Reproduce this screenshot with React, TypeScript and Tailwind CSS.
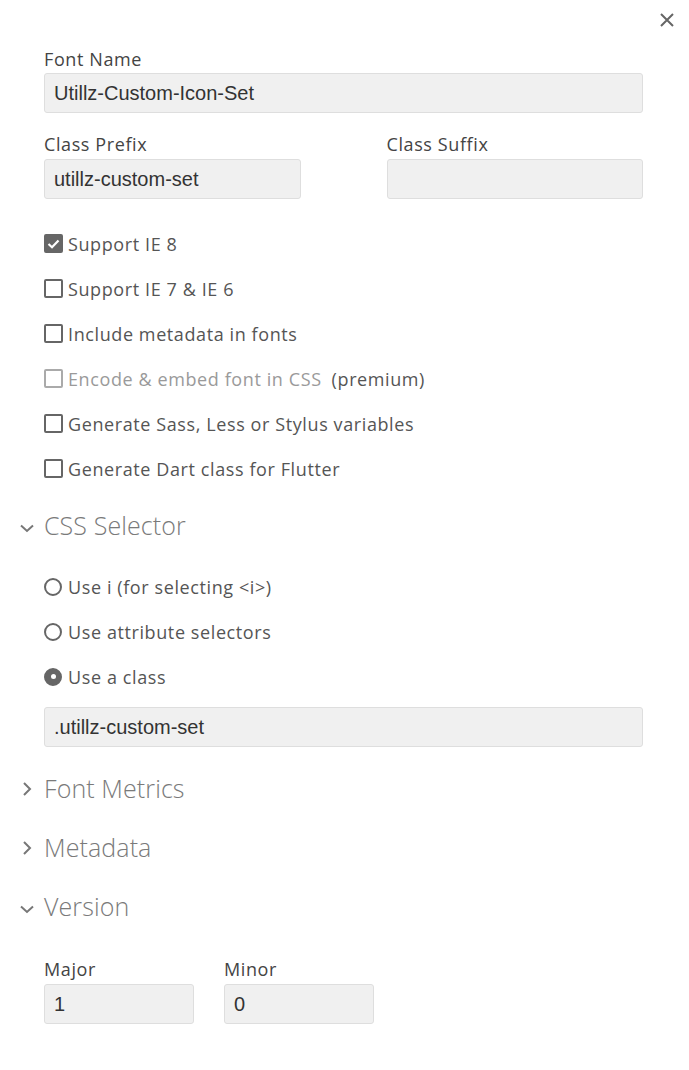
import { useState } from 'react';

const inputCls =
  "block w-full h-[40px] px-[9px] bg-[#f0f0f0] border border-[#dedede] rounded-[3px] text-[20px] tracking-normal text-[#333] font-['Liberation_Sans',Arial,sans-serif] outline-none";

function Chevron({ open }: { open: boolean }) {
  return open ? (
    <svg width="16" height="10" viewBox="0 0 16 10" className="absolute left-[19px] top-1/2 -translate-y-[3px]">
      <path d="M2 2.5 L8 8 L14 2.5" fill="none" stroke="#777" strokeWidth="2" />
    </svg>
  ) : (
    <svg width="10" height="16" viewBox="0 0 10 16" className="absolute left-[22px] top-1/2 -translate-y-1/2">
      <path d="M2 2 L8 8 L2 14" fill="none" stroke="#777" strokeWidth="2" />
    </svg>
  );
}

function Section({ title, open }: { title: string; open: boolean }) {
  return (
    <div className="relative h-[40px] flex items-center -ml-[44px] pl-[44px] text-[25px] tracking-[0.1px] font-light text-[#7a7a7a] cursor-pointer">
      <Chevron open={open} />
      {title}
    </div>
  );
}

function Check({ label, checked, disabled, extra, onToggle }: { label: string; checked?: boolean; disabled?: boolean; extra?: string; onToggle?: () => void }) {
  return (
    <label className="h-[45px] flex items-center cursor-pointer">
      <span
        onClick={onToggle}
        className={`w-[19px] h-[19px] rounded-[2px] border-2 flex items-center justify-center mr-[5px] ${
          checked ? 'bg-[#666] border-[#666]' : disabled ? 'border-[#aaa]' : 'border-[#666]'
        }`}
      >
        {checked && (
          <svg width="13" height="10" viewBox="0 0 13 10">
            <path d="M1.5 5 L5 8.2 L11.5 1.5" fill="none" stroke="#fff" strokeWidth="2.2" />
          </svg>
        )}
      </span>
      <span className={`pt-[1px] ${disabled ? 'text-[#9a9a9a]' : 'text-[#555]'}`}>{label}</span>
      {extra && <span className="pt-[1px] ml-[10px] text-[#555]">{extra}</span>}
    </label>
  );
}

function Radio({ label, checked, onPick }: { label: string; checked?: boolean; onPick: () => void }) {
  return (
    <label className="h-[45px] flex items-center cursor-pointer" onClick={onPick}>
      <span
        className={`w-[18px] h-[18px] rounded-full border-2 border-[#666] flex items-center justify-center mr-[6px] ${
          checked ? 'bg-[#666]' : ''
        }`}
      >
        {checked && <span className="w-[5px] h-[5px] rounded-full bg-white" />}
      </span>
      <span className="pt-[1px] text-[#555]">{label}</span>
    </label>
  );
}

export default function App() {
  const [ie8, setIe8] = useState(true);
  const [ie7, setIe7] = useState(false);
  const [meta, setMeta] = useState(false);
  const [sass, setSass] = useState(false);
  const [dart, setDart] = useState(false);
  const [selector, setSelector] = useState('class');

  return (
    <div className="relative w-[689px] h-[1070px] bg-white font-['Open_Sans',sans-serif] text-[18px] tracking-[0.6px] text-[#555]">
      <button className="absolute right-[14px] top-[12px] w-[16px] h-[16px]" aria-label="Close">
        <svg width="16" height="16" viewBox="0 0 16 16">
          <path d="M2 2 L14 14 M14 2 L2 14" stroke="#666" strokeWidth="2" />
        </svg>
      </button>

      <div className="pl-[44px] pr-[46px] pt-[47px]">
        <div className="leading-[24px] text-[#444] mb-[2px]">Font Name</div>
        <input className={inputCls} defaultValue="Utillz-Custom-Icon-Set" />

        <div className="grid grid-cols-2 gap-x-[86px] mt-[19px]">
          <div>
            <div className="leading-[24px] text-[#444] mb-[3px]">Class Prefix</div>
            <input className={inputCls} defaultValue="utillz-custom-set" />
          </div>
          <div>
            <div className="leading-[24px] text-[#444] mb-[3px]">Class Suffix</div>
            <input className={inputCls} defaultValue="" />
          </div>
        </div>

        <div className="mt-[22px]">
          <Check label="Support IE 8" checked={ie8} onToggle={() => setIe8(!ie8)} />
          <Check label="Support IE 7 & IE 6" checked={ie7} onToggle={() => setIe7(!ie7)} />
          <Check label="Include metadata in fonts" checked={meta} onToggle={() => setMeta(!meta)} />
          <Check label="Encode & embed font in CSS" disabled extra="(premium)" />
          <Check label="Generate Sass, Less or Stylus variables" checked={sass} onToggle={() => setSass(!sass)} />
          <Check label="Generate Dart class for Flutter" checked={dart} onToggle={() => setDart(!dart)} />
        </div>

        <div className="mt-[15px]">
          <Section title="CSS Selector" open />
        </div>

        <div className="mt-[18px]">
          <Radio label="Use i (for selecting <i>)" checked={selector === 'i'} onPick={() => setSelector('i')} />
          <Radio label="Use attribute selectors" checked={selector === 'attr'} onPick={() => setSelector('attr')} />
          <Radio label="Use a class" checked={selector === 'class'} onPick={() => setSelector('class')} />
        </div>
        <div className="mt-[8px]">
          <input className={inputCls} defaultValue=".utillz-custom-set" />
        </div>

        <div className="mt-[22px] flex flex-col gap-[19px]">
          <Section title="Font Metrics" open={false} />
          <Section title="Metadata" open={false} />
          <Section title="Version" open />
        </div>

        <div className="mt-[30px] flex gap-[30px]">
          <div className="w-[150px]">
            <div className="leading-[24px] text-[#444] mb-[3px]">Major</div>
            <input className={inputCls} defaultValue="1" />
          </div>
          <div className="w-[150px]">
            <div className="leading-[24px] text-[#444] mb-[3px]">Minor</div>
            <input className={inputCls} defaultValue="0" />
          </div>
        </div>
      </div>
    </div>
  );
}
